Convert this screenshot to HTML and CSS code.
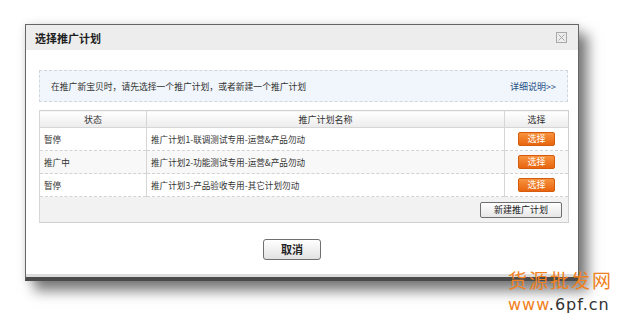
FILE: index.html
```html
<!DOCTYPE html>
<html>
<head>
<meta charset="utf-8">
<title>选择推广计划</title>
<link rel="stylesheet" href="styles.css">
</head>
<body>
<div class="page">
  <div class="dialog">
    <div class="titlebar">
      <span class="title">选择推广计划</span>
      <svg class="close" width="11" height="11" viewBox="0 0 11 11">
        <rect x="0.5" y="0.5" width="10" height="10" fill="none" stroke="#a8a8a8"/>
        <path d="M2.5 2.5 L8.5 8.5 M8.5 2.5 L2.5 8.5" stroke="#a8a8a8" stroke-width="1"/>
      </svg>
    </div>
    <div class="content">
      <div class="info">
        <span>在推广新宝贝时，请先选择一个推广计划，或者新建一个推广计划</span>
        <a class="more">详细说明&gt;&gt;</a>
      </div>
      <table class="plans">
        <thead>
          <tr><th class="c-state">状态</th><th class="c-name">推广计划名称</th><th class="c-pick">选择</th></tr>
        </thead>
        <tbody>
          <tr><td>暂停</td><td>推广计划1-联调测试专用-运营&amp;产品勿动</td><td class="pick"><button class="orange">选择</button></td></tr>
          <tr class="alt"><td>推广中</td><td>推广计划2-功能测试专用-运营&amp;产品勿动</td><td class="pick"><button class="orange">选择</button></td></tr>
          <tr><td>暂停</td><td>推广计划3-产品验收专用-其它计划勿动</td><td class="pick"><button class="orange">选择</button></td></tr>
          <tr class="foot"><td colspan="3"><button class="gray">新建推广计划</button></td></tr>
        </tbody>
      </table>
      <div class="actions"><button class="cancel">取消</button></div>
    </div>
    <div class="strip"></div>
  </div>
  <div class="mark">
    <div class="mark-cn">货源批发网</div>
    <div class="mark-en"><span class="o">www</span>.6pf.cn</div>
  </div>
</div>
</body>
</html>
```
FILE: styles.css
```css
* { box-sizing: border-box; }
html, body { margin: 0; padding: 0; background: #fff; }
body { font-family: "Noto Sans CJK SC", "DejaVu Sans", sans-serif; color: #333; }
.page { position: relative; width: 624px; height: 325px; overflow: hidden; padding-top: 24px; padding-left: 25px; }
.dialog {
  width: 554px;
  background: #fff;
  border: 1px solid #666;
  border-bottom: 4px solid #4a4a4a;
  box-shadow: 9px 10px 12px rgba(0,0,0,0.5), 0 0 8px rgba(0,0,0,0.12);
}
.titlebar {
  height: 25px;
  background: #ededed;
  display: flex;
  align-items: center;
  justify-content: space-between;
  padding: 0 10px 0 9px;
}
.title { font-size: 11px; font-weight: bold; color: #1e1e1e; }
.close { display: block; margin-right: 1px; }
.content { padding: 20px 10px 14px 13px; }
.info {
  height: 32px;
  background: #f0f6fb;
  border: 1px dashed #cfd6dc;
  display: flex;
  align-items: center;
  justify-content: space-between;
  padding: 0 11px 0 11px;
  font-size: 8.8px;
  color: #333;
}
.more { color: #1f4f86; font-size: 9px; }
.plans {
  margin-top: 8px;
  width: 529px;
  border-collapse: collapse;
  table-layout: fixed;
  border: 1px solid #cfcfcf;
  font-size: 8.6px;
  color: #333;
}
.plans th {
  height: 17px;
  font-weight: normal;
  font-size: 9px;
  background: linear-gradient(#ffffff, #ececec);
  border-bottom: 1px solid #d6d6d6;
  border-left: 1px solid #d6d6d6;
  padding: 0;
  text-align: center;
}
.c-state { width: 107px; }
.c-name { width: 358px; }
.c-pick { width: 64px; }
.plans td {
  height: 23px;
  padding: 0 0 0 4px;
  border-left: 1px solid #d6d6d6;
  border-bottom: 1px dashed #d2d2d2;
}
.plans tr.alt td { background: #f8f8f8; }
.plans td.pick { text-align: center; padding: 0; }
.plans tr.foot td {
  height: 26px;
  background: #f2f2f2;
  text-align: right;
  padding: 0 6px 0 0;
  border-bottom: 0;
}
button { font-family: inherit; margin: 0; cursor: pointer; }
.orange {
  width: 37px;
  height: 14px;
  padding: 0;
  border: 1px solid #d55c0c;
  border-radius: 2px;
  background: linear-gradient(#f8933f, #e8650e);
  color: #fff;
  font-size: 9px;
  line-height: 12px;
  vertical-align: middle;
}
.gray {
  width: 82px;
  height: 16px;
  padding: 0;
  border: 1px solid #6f6f6f;
  border-radius: 2px;
  background: linear-gradient(#ffffff, #e6e6e6);
  color: #222;
  font-size: 9px;
  line-height: 14px;
  vertical-align: middle;
}
.actions { display: flex; justify-content: center; margin-top: 16px; padding-right: 23px; }
.cancel {
  width: 58px;
  height: 21px;
  padding: 0;
  border: 1px solid #6f6f6f;
  border-radius: 3px;
  background: linear-gradient(#ffffff, #e2e2e2);
  color: #222;
  font-size: 11px;
  font-weight: bold;
  line-height: 19px;
}
.strip { height: 3px; background: #dcdcdc; }
.mark { position: absolute; left: 508px; top: 268px; width: 112px; }
.mark-cn { font-size: 19px; line-height: 24px; color: #f08020; letter-spacing: 2px; }
.mark-en { font-size: 16px; line-height: 20px; margin-top: 3px; color: #333; font-family: "DejaVu Sans", sans-serif; letter-spacing: 1px; }
.mark-en .o { color: #f08020; }
```
